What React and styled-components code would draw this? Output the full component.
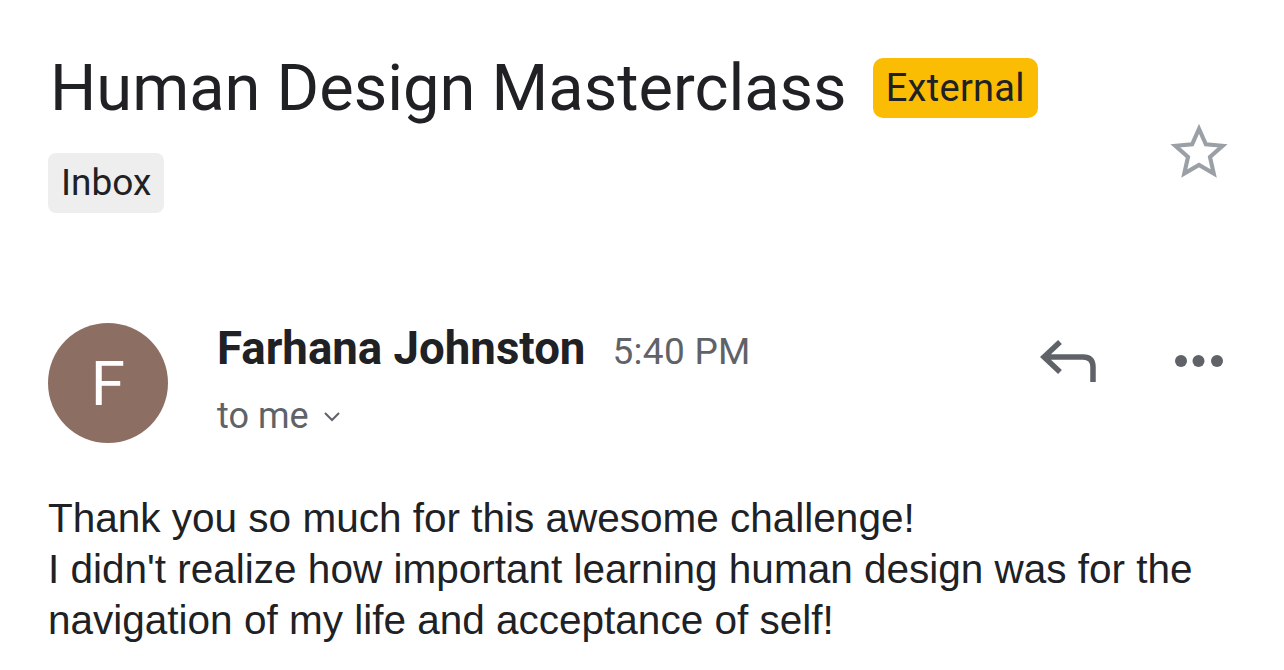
import React from 'react';
import styled, { createGlobalStyle } from 'styled-components';

const GlobalStyle = createGlobalStyle`
    body {
        margin: 0;
        background: #ffffff;
        font-family: "Roboto", "Liberation Sans", sans-serif;
        color: #202124;
    }
`;

// Star outline used for the "not starred" state
const StarIcon = () => (
    <svg width="62" height="62" viewBox="0 0 24 24">
        <path
            d="M12 3l2.65 6 6.5.6-4.9 4.35 1.45 6.4L12 17l-5.7 3.35 1.45-6.4L2.85 9.6l6.5-.6z"
            fill="none"
            stroke="#9aa0a6"
            strokeWidth="1.6"
        />
    </svg>
);

const ReplyIcon = () => (
    <svg width="58" height="44" viewBox="0 0 58 44">
        <path
            d="M20 3 L4 18 L20 33 M4 18 H43 Q53 18 53 28 V43"
            fill="none"
            stroke="#5f6368"
            strokeWidth="5.5"
        />
    </svg>
);

const MoreIcon = () => (
    <svg width="50" height="14" viewBox="0 0 50 14">
        <circle cx="7" cy="7" r="6" fill="#5f6368" />
        <circle cx="24.5" cy="7" r="6" fill="#5f6368" />
        <circle cx="43" cy="7" r="6" fill="#5f6368" />
    </svg>
);

const Chevron = () => (
    <svg width="18" height="12" viewBox="0 0 18 12">
        <path d="M2 3 L9 10 L16 3" fill="none" stroke="#5f6368" strokeWidth="2" />
    </svg>
);

export default function App() {
    return (
        <Page>
            <GlobalStyle />
            <Header>
                <div>
                    <TitleRow>
                        <Title>Human Design Masterclass</Title>
                        <Badge>External</Badge>
                    </TitleRow>
                    <Chip>Inbox</Chip>
                </div>
                <StarButton>
                    <StarIcon />
                </StarButton>
            </Header>

            <SenderRow>
                <Avatar color="#8d6e63">F</Avatar>
                <Meta>
                    <NameRow>
                        <Name>Farhana Johnston</Name>
                        <Time>5:40 PM</Time>
                    </NameRow>
                    <Recipient>
                        to me <Chevron />
                    </Recipient>
                </Meta>
                <Actions>
                    <IconButton>
                        <ReplyIcon />
                    </IconButton>
                    <IconButton>
                        <MoreIcon />
                    </IconButton>
                </Actions>
            </SenderRow>

            <Body>
                Thank you so much for this awesome challenge!
                <br />
                I didn't realize how important learning human design was for the navigation of my life and acceptance of self!
            </Body>
        </Page>
    );
}

const Page = styled.div`
    width: 1284px;
    height: 670px;
    box-sizing: border-box;
    padding: 44px 54px 0 48px;
    overflow: hidden;
`;

const Header = styled.div`
    display: flex;
    justify-content: space-between;
    align-items: flex-start;
`;

const TitleRow = styled.div`
    display: flex;
    align-items: center;
    gap: 26px;
`;

const Title = styled.h1`
    margin: 0 0 0 2px;
    font-family: "Roboto", sans-serif;
    font-weight: 400;
    font-size: 65px;
    line-height: 88px;
    color: #202124;
`;

const Badge = styled.span`
    display: inline-block;
    background: #fbbc04;
    border-radius: 10px;
    padding: 0 13px;
    height: 60px;
    line-height: 60px;
    font-size: 38px;
    letter-spacing: 0.3px;
    color: #202124;
`;

const Chip = styled.span`
    display: inline-block;
    margin-top: 21px;
    background: #eeeeee;
    border-radius: 8px;
    padding: 0 13px;
    height: 60px;
    line-height: 60px;
    font-size: 37px;
    color: #202124;
`;

const StarButton = styled.div`
    margin-top: 77px;
    display: flex;
`;

const SenderRow = styled.div`
    display: flex;
    align-items: flex-start;
    margin-top: 110px;
`;

const Avatar = styled.div`
    width: 120px;
    height: 120px;
    border-radius: 50%;
    background: ${(p) => p.color};
    color: #ffffff;
    font-size: 62px;
    display: flex;
    align-items: center;
    justify-content: center;
    flex-shrink: 0;
`;

const Meta = styled.div`
    margin-left: 49px;
    flex: 1;
`;

const NameRow = styled.div`
    display: flex;
    align-items: baseline;
    gap: 27px;
`;

const Name = styled.span`
    font-weight: 700;
    font-size: 45.6px;
    line-height: 52px;
    color: #202124;
`;

const Time = styled.span`
    font-size: 37px;
    letter-spacing: 0.3px;
    color: #5f6368;
`;

const Recipient = styled.div`
    display: flex;
    align-items: center;
    gap: 14px;
    margin-top: 20px;
    font-size: 36px;
    color: #5f6368;
`;

const Actions = styled.div`
    display: flex;
    align-items: center;
    gap: 76px;
    margin-top: 16px;
    margin-right: 6px;
`;

const IconButton = styled.div`
    display: flex;
    align-items: center;
`;

const Body = styled.div`
    margin-top: 50px;
    font-family: "Liberation Sans", Arial, sans-serif;
    font-size: 40.5px;
    line-height: 51px;
    color: #202124;
    max-width: 1200px;
`;
